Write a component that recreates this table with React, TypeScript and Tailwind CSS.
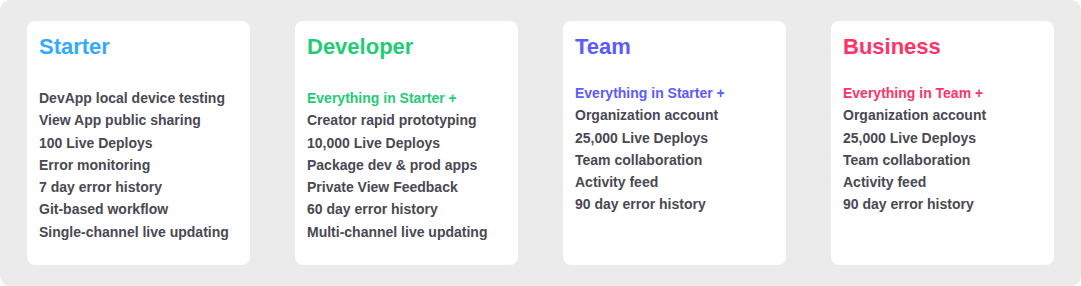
const plans = [
  {
    name: 'Starter',
    color: 'text-[#33aaff]',
    lead: null as string | null,
    gap: 'mt-[27px]',
    items: [
      'DevApp local device testing',
      'View App public sharing',
      '100 Live Deploys',
      'Error monitoring',
      '7 day error history',
      'Git-based workflow',
      'Single-channel live updating',
    ],
  },
  {
    name: 'Developer',
    color: 'text-[#22cc77]',
    lead: 'Everything in Starter +',
    gap: 'mt-[27px]',
    items: [
      'Creator rapid prototyping',
      '10,000 Live Deploys',
      'Package dev & prod apps',
      'Private View Feedback',
      '60 day error history',
      'Multi-channel live updating',
    ],
  },
  {
    name: 'Team',
    color: 'text-[#5b5bff]',
    lead: 'Everything in Starter +',
    gap: 'mt-[22px]',
    items: [
      'Organization account',
      '25,000 Live Deploys',
      'Team collaboration',
      'Activity feed',
      '90 day error history',
    ],
  },
  {
    name: 'Business',
    color: 'text-[#ff3366]',
    lead: 'Everything in Team +',
    gap: 'mt-[22px]',
    items: [
      'Organization account',
      '25,000 Live Deploys',
      'Team collaboration',
      'Activity feed',
      '90 day error history',
    ],
  },
];

export default function App() {
  return (
    <div className="w-[1081px] h-[286px] bg-white font-['Liberation_Sans',Arial,sans-serif]">
      <div className="h-full rounded-[10px] bg-[#ebebeb] px-[27px] py-[21px] flex gap-[45px]">
        {plans.map((p) => (
          <div key={p.name} className="w-[223px] rounded-[8px] bg-white px-3 pt-[13px]">
            <h2 className={`text-[22px] leading-[26px] font-bold ${p.color}`}>{p.name}</h2>
            <ul className={`${p.gap} text-[14px] leading-[22.3px] font-bold text-[#494952]`}>
              {p.lead && <li className={p.color}>{p.lead}</li>}
              {p.items.map((it) => (
                <li key={it}>{it}</li>
              ))}
            </ul>
          </div>
        ))}
      </div>
    </div>
  );
}
